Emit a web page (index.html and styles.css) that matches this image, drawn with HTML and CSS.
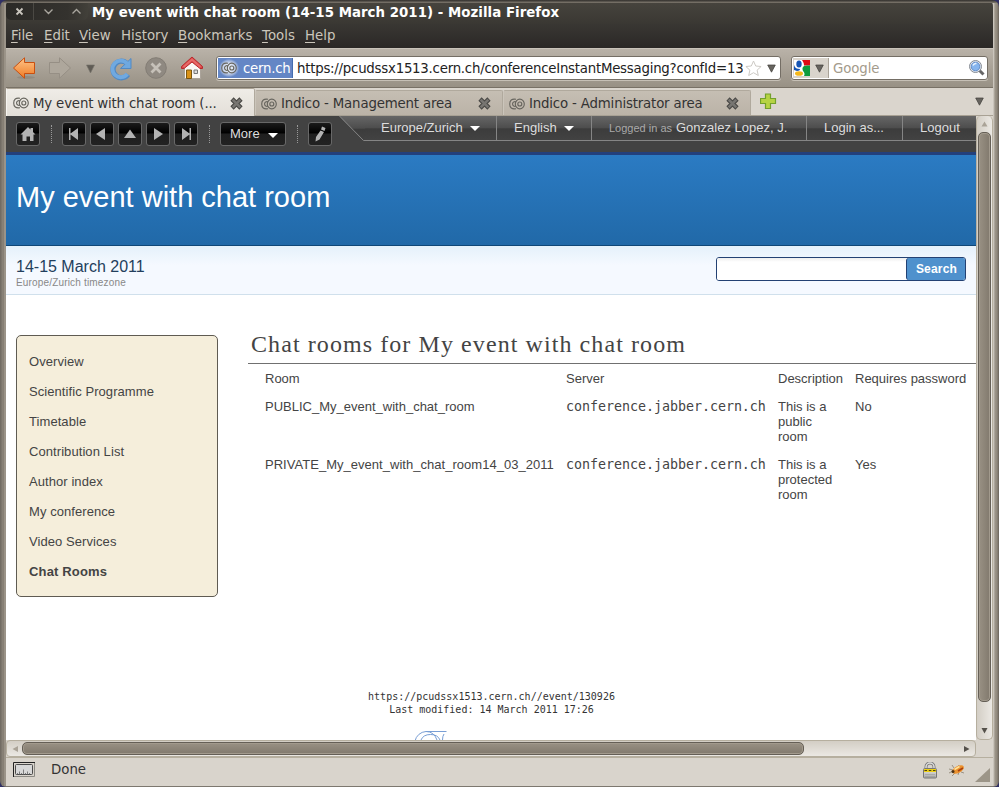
FILE: index.html
```html
<!DOCTYPE html>
<html lang="en">
<head>
<meta charset="utf-8">
<title>My event with chat room</title>
<link rel="stylesheet" href="styles.css">
</head>
<body>
<svg class="defs" width="0" height="0">
  <defs>
    <symbol id="co" viewBox="0 0 16 12">
      <g fill="none" stroke="#68665f" stroke-width="1.15">
        <path d="M7 1.300Q.7.300.7 6T7 10.700"/><path d="M7 4A2.300 2.300 0 1 0 7 8"/>
        <ellipse cx="10.800" cy="6" rx="4.500" ry="4.900"/><circle cx="10.800" cy="6" r="2"/>
      </g>
    </symbol>
    <symbol id="x" viewBox="0 0 13 13"><path d="M2 2l9 9M11 2L2 11" stroke="#4a4946" stroke-width="4.600"/><path d="M2.700 2.700l7.600 7.600M10.300 2.700L2.700 10.300" stroke="#777571" stroke-width="2.600"/></symbol>
    <symbol id="down" viewBox="0 0 9 9"><path d="M.7 1h7.600L4.500 8.200z" fill="#67645f" stroke="#3f3d39" stroke-width=".7"/></symbol>
    <linearGradient id="orange" x2="0" y2="1"><stop stop-color="#ffc58a"/><stop offset="1" stop-color="#ef7b24"/></linearGradient>
    <linearGradient id="silver" x2="0" y2="1"><stop stop-color="#ececea"/><stop offset="1" stop-color="#a8a8a5"/></linearGradient>
  </defs>
</svg>
<div class="window">
  <header class="titlebar">
    <div class="winbtns">
      <svg width="86" height="18" viewBox="0 0 86 18" fill="none" stroke="#aaa79f">
        <path d="M10.500 5.500l6 6M16.500 5.500l-6 6" stroke="#c9c6be" stroke-width="1.800"/>
        <path d="M38.500 6.500l4 4 4-4M66.500 10.500l4-4 4 4" stroke-width="1.300"/>
        <path d="M27.500 0v17" stroke="#4b4944"/>
      </svg>
    </div>
    <span class="wintitle">My event with chat room (14-15 March 2011) - Mozilla Firefox</span>
  </header>
  <nav class="menubar">
    <span class="m1"><u>F</u>ile</span><span class="m2"><u>E</u>dit</span><span class="m3"><u>V</u>iew</span><span class="m4">Hi<u>s</u>tory</span><span class="m5"><u>B</u>ookmarks</span><span class="m6"><u>T</u>ools</span><span class="m7"><u>H</u>elp</span>
  </nav>
  <div class="toolbar">
    <svg class="navicons" width="210" height="38" viewBox="6 49 210 38">
      <ellipse cx="26" cy="77.500" rx="9" ry="1.500" fill="#928b80"/>
      <path d="M13.500 68L24.500 57.800V62.500H34.500V73.500H24.500V78.200Z" fill="url(#orange)" stroke="#c94f10"/>
      <path d="M70.500 68L59.500 57.800V62.500H49.500V73.500H59.500V78.200Z" fill="#aea79c" stroke="#968f85"/>
      <path d="M86.500 65h8l-4 8z" fill="#605c55" stroke="#77736b" stroke-width=".6"/>
      <path d="M128 74.500A8.300 8.300 0 1 1 126.500 63" fill="none" stroke="#5189c3" stroke-width="5.200"/>
      <path d="M131 58.500V68.500H120.500Z" fill="#6fa8df" stroke="#5189c3"/>
      <path d="M127.300 74A8.300 8.300 0 1 1 127 63.500" fill="none" stroke="#70a9e0" stroke-width="3.800"/>
      <circle cx="156" cy="68" r="10.300" fill="#8f8981" stroke="#837d75"/>
      <path d="M151.500 63.500l9 9M160.500 63.500l-9 9" stroke="#c6c1b9" stroke-width="2.800"/>
      <path d="M184.500 67l7.500-8 8.500 8v11.500h-16z" fill="#faf8f5" stroke="#aaa39a"/>
      <path d="M186.500 70h5v8.500h-5z" fill="#d99218" stroke="#7c5710"/>
      <path d="M194 70h3.500v3.500h-3.500z" fill="#dedede" stroke="#777"/>
      <path d="M181.500 66.500L192 57l10.500 9.500v2H200L192 62l-8 6.500h-2.500z" fill="#d94747" stroke="#b8292d"/>
      <path d="M183.500 67l8.500-7.500 8.500 7.500" fill="none" stroke="#e76a68" stroke-width="2"/>
    </svg>
    <div class="urlbar">
      <div class="site"><span class="glow"><svg width="16" height="12"><use href="#co"/></svg></span><span class="sitename">cern.ch</span></div>
      <span class="url">https://pcudssx1513.cern.ch/conferenceInstantMessaging?confId=13</span>
      <svg class="star" width="17" height="17" viewBox="0 0 17 17"><path d="M8.500 1l2.200 5 5.400.5-4 3.700 1.200 5.300-4.800-2.800-4.800 2.800 1.200-5.300-4-3.700 5.400-.5z" fill="#fff" stroke="#ccc9c4"/></svg>
      <svg class="urldown" width="9" height="9"><use href="#down"/></svg>
    </div>
    <div class="searchbar">
      <div class="engine">
        <svg width="16" height="16" viewBox="0 0 16 16"><path fill="#fff" d="M0 0h16v16H0z"/><path fill="#df0a13" d="M8 0h8v5.500H10C10 3 9 2 8 0z"/><path fill="#0f9b3c" d="M8.500 8c1-2.500 3-2.500 7.500-2.500V16H10c2-4-2-4-1.500-8z"/><path fill="#1655b5" d="M0 5c1 3 3 4 6 4 0 1-1 2-3 2L0 10z"/><ellipse cx="5" cy="4" rx="2.700" ry="3.500" fill="#1655b5"/><ellipse cx="5" cy="13.500" rx="4" ry="2.300" fill="#f4b71b"/></svg>
        <svg width="9" height="9"><use href="#down"/></svg>
      </div>
      <span class="placeholder">Google</span>
      <svg class="mag" width="18" height="18" viewBox="0 0 18 18"><path d="M11.500 11.500l4 4" stroke="#666" stroke-width="3"/><circle cx="7.500" cy="7.500" r="6" fill="#dfe5ee" stroke="#868b93"/><circle cx="7.500" cy="7.500" r="4.300" fill="#86b5ee" stroke="#4f7fc0" stroke-width=".8"/><path d="M5 6.500q.800-2.500 3.500-2" fill="none" stroke="#e9f3ff" stroke-width="1.500"/></svg>
    </div>
  </div>
  <div class="tabs">
    <div class="tab active"><svg width="16" height="12"><use href="#co"/></svg><span class="t1">My event with chat room (...</span><svg class="close" width="13" height="13"><use href="#x"/></svg></div>
    <div class="tab"><svg width="16" height="12"><use href="#co"/></svg><span class="t2">Indico - Management area</span><svg class="close" width="13" height="13"><use href="#x"/></svg></div>
    <div class="tab"><svg width="16" height="12"><use href="#co"/></svg><span class="t3">Indico - Administrator area</span><svg class="close" width="13" height="13"><use href="#x"/></svg></div>
    <svg class="plus" width="17" height="17" viewBox="0 0 17 17"><path d="M5.500 1h5v4.500h5v5h-5v5h-5v-5h-5v-5h5z" fill="#b6d343" stroke="#73a02b" stroke-width="1.200"/></svg>
    <svg class="alltabs" width="9" height="9"><use href="#down"/></svg>
  </div>
  <div class="middle">
    <main class="page">
      <div class="topbar">
        <div class="tools">
          <button class="tool home"><svg width="22" height="22" viewBox="0 0 22 22"><path d="M3.500 11.500l7.500-7.500 2.500 2.500V5H16v4l2.500 2.500h-2V18H13v-4.500H9.500V18H5.500v-6.500z" fill="#b3b3b3"/></svg></button>
          <i class="sep s1"></i>
          <button class="tool"><svg width="22" height="22" viewBox="0 0 22 22"><path d="M6 5h1.500v5.500L15 5v12l-7.500-5.500V17H6z" fill="#b3b3b3"/></svg></button>
          <button class="tool"><svg width="22" height="22" viewBox="0 0 22 22"><path d="M14 5v12l-9-6z" fill="#b3b3b3"/></svg></button>
          <button class="tool"><svg width="22" height="22" viewBox="0 0 22 22"><path d="M5 15h12l-6-8.500z" fill="#b3b3b3"/></svg></button>
          <button class="tool"><svg width="22" height="22" viewBox="0 0 22 22"><path d="M7 5v12l9-6z" fill="#b3b3b3"/></svg></button>
          <button class="tool"><svg width="22" height="22" viewBox="0 0 22 22"><path d="M16 5h-1.500v5.500L7 5v12l7.500-5.500V17H16z" fill="#b3b3b3"/></svg></button>
          <i class="sep s2"></i>
          <button class="tool more">More<b class="caret"></b></button>
          <i class="sep s3"></i>
          <button class="tool"><svg width="22" height="22" viewBox="0 0 22 22"><path d="M13 3.500l3.500 1.500-1 3-3.500-1.500zM11.500 7.500l3.500 1.500-4.500 7.500L6.500 18.500l.5-4.500z" fill="#b3b3b3"/></svg></button>
        </div>
        <div class="session">
          <svg class="slope" width="26" height="25" viewBox="0 0 26 25"><defs><linearGradient id="bar" x2="0" y2="1"><stop stop-color="#666"/><stop offset=".5" stop-color="#4d4d4d"/><stop offset=".53" stop-color="#3c3c3c"/><stop offset="1" stop-color="#424242"/></linearGradient></defs><path d="M0 0h26v24.500H24z" fill="url(#bar)"/><path d="M.5 0L24.500 24.500H26" fill="none" stroke="#858585"/></svg>
          <div class="cell c1">Europe/Zurich<b class="caret"></b></div>
          <div class="cell c2">English<b class="caret"></b></div>
          <div class="cell c3"><small>Logged in as</small><span>Gonzalez Lopez, J.</span></div>
          <div class="cell c4">Login as...</div>
          <div class="cell c5">Logout</div>
        </div>
      </div>
      <div class="banner"><h1>My event with chat room</h1></div>
      <div class="subbanner">
        <div><div class="date">14-15 March 2011</div><div class="zone">Europe/Zurich timezone</div></div>
        <div class="search"><div class="field"></div><button>Search</button></div>
      </div>
      <div class="content">
        <ul class="side">
          <li>Overview</li><li>Scientific Programme</li><li>Timetable</li><li>Contribution List</li><li>Author index</li><li>My conference</li><li>Video Services</li><li class="current">Chat Rooms</li>
        </ul>
        <section class="rooms">
          <h2>Chat rooms for My event with chat room</h2>
          <div class="grid">
            <span>Room</span><span>Server</span><span>Description</span><span>Requires password</span>
            <span>PUBLIC_My_event_with_chat_room</span><code>conference.jabber.cern.ch</code><span>This is a<br>public<br>room</span><span>No</span>
            <span class="private">PRIVATE_My_event_with_chat_room14_03_2011</span><code>conference.jabber.cern.ch</code><span>This is a<br>protected<br>room</span><span>Yes</span>
          </div>
        </section>
      </div>
      <footer class="foot">https://pcudssx1513.cern.ch//event/130926<br>Last modified: 14 March 2011 17:26
        <svg class="cern" width="34" height="10" viewBox="0 0 34 10" fill="none" stroke="#789ed5"><path d="M1 11A12 12 0 0 1 12 1.500H32.500M7 10A10 8 0 0 1 26 10M12 1.500Q20 1.500 23 10M28.500 10q0-4 1.500-6"/></svg>
      </footer>
    </main>
    <div class="vscroll"><svg width="17" height="16" viewBox="0 0 17 16"><path d="M5.500 10.500h6L8.500 5.500z" fill="#aaa397"/></svg><div class="vthumb"></div><svg class="vend" width="17" height="18" viewBox="0 0 17 18"><path d="M5.500 7h6l-3 5.500z" fill="#55514b"/></svg></div>
  </div>
  <div class="hscroll"><div class="htrack"><svg width="16" height="16" viewBox="0 0 16 16"><path d="M11 5v6L5.500 8z" fill="#aaa397"/></svg><div class="hthumb"></div><svg class="hend" width="18" height="16" viewBox="0 0 18 16"><path d="M7 5v6l5.500-3z" fill="#55514b"/></svg></div></div>
  <div class="status">
    <svg width="23" height="16" viewBox="0 0 23 16"><path d="M.5 15V.5H22" fill="none" stroke="#222"/><path d="M1 14.500h20.500V1" fill="none" stroke="#8b8983"/><rect x="2.500" y="2.500" width="17" height="10" rx="1" fill="#d8d8d8" stroke="#4b4b4b"/><path d="M4.500 11v1.500M6.500 9.500v3M8.500 11v1.500M10.500 7.500v5M12.500 11v1.500M14.500 9.500v3M16.500 11v1.500" stroke="#666" stroke-width=".8"/></svg>
    <span>Done</span>
    <svg class="lock" width="16" height="17" viewBox="0 0 16 17"><path d="M4 8V5a4 4 0 0 1 8 0v3" fill="none" stroke="#777" stroke-width="3"/><path d="M4 8V5a4 4 0 0 1 8 0v3" fill="none" stroke="#ddd" stroke-width="1.500"/><rect x="1.500" y="6.500" width="13" height="9.500" rx="1" fill="url(#silver)" stroke="#777"/><path d="M2 7h12v3H2z" fill="#edcf13"/><path d="M2.500 8.500h2.500M6.800 8.500h2.500M11 8.500h2.500" stroke="#4c4410" stroke-width="1.200"/><path d="M3 12.500h10M3 14.500h10" stroke="#999" stroke-width=".6"/></svg>
    <svg class="bug" width="18" height="17" viewBox="0 0 18 17"><path d="M1 7l4 1M6 6l-2-3M4 14l3-3M10 13l1-3M10 5l1-2M13 10l3 1M1 11l4-2" stroke="#8a806f" stroke-width=".8"/><ellipse cx="10" cy="7.500" rx="6.500" ry="3.300" transform="rotate(-28 10 7.500)" fill="#ec922e"/><path d="M10 9l5-3" stroke="#a9410f" stroke-width="1.500"/><path d="M6.500 7.500l5-3" stroke="#ffe29b" stroke-width="1.500"/><circle cx="5" cy="9.500" r="1.500" fill="#4a3218"/></svg>
    <svg class="grip" width="15" height="14" viewBox="0 0 15 14"><path d="M0 14L15 0v14z" fill="#9c9588"/></svg>
  </div>
</div>
</body>
</html>
```
FILE: styles.css
```css
* { box-sizing: border-box; }
html, body { margin: 0; width: 999px; height: 787px; overflow: hidden; background: #303064; }
.defs { position: absolute; }
svg { display: block; flex: none; }
.window {
  width: 999px; height: 787px; overflow: hidden;
  border-style: solid; border-color: transparent; border-width: 3px 6px 1px;
  border-radius: 7px 7px 6px 6px;
  background:
    linear-gradient(#7d786f, #7d786f) border-box bottom / 100% 1px no-repeat,
    linear-gradient(#302e2b, #817a70) border-box top / 100% 3px no-repeat,
    linear-gradient(90deg, #6d675f, #8c857a 3px, #81796e 4px, #b3aca0 5px, #837c72 6px, transparent 6px) border-box,
    linear-gradient(90deg, #d9d4cc, #9d968a 2px, #90887c 4px, #69635a 6px) border-box right / 6px 100% no-repeat,
    #d9d4cc border-box;
  display: flex; flex-direction: column;
  font: 13.33px "DejaVu Sans", sans-serif; color: #333;
}
.titlebar { height: 21px; flex: none; display: flex; background: linear-gradient(#46433d, #3a3833); }
.winbtns { width: 82px; height: 17px; overflow: hidden; background: linear-gradient(90deg, #2b2a27, #34322e 75%, #42403a); border-radius: 0 0 5px 5px; }
.wintitle { margin-left: 4px; color: #fff; font-weight: bold; line-height: 20px; letter-spacing: .04px; white-space: nowrap; }
.menubar { height: 24px; flex: none; display: flex; background: linear-gradient(#393733, #2b2826); color: #cbc6bb; line-height: 23px; padding-left: 5px; }
.menubar span { white-space: nowrap; }
.menubar u { text-underline-offset: 2px; }
.m1 { width: 33px; } .m2 { width: 35px; } .m3 { width: 42px; } .m4 { width: 57px; } .m5 { width: 84px; } .m6 { width: 43px; }
.toolbar { height: 40px; flex: none; display: flex; background: linear-gradient(#b9b2a8, #989185); border-top: 1px solid #c9c3b9; border-bottom: 1px solid #787166; }
.urlbar { margin: 7px 0 0 0; width: 565px; height: 24px; border: 1px solid #746e65; border-radius: 3px; background: #fff; display: flex; align-items: center; box-shadow: 0 1px #c6c0b6; padding: 1px; }
.site { width: 75px; height: 20px; background: #6486c5; display: flex; align-items: center; color: #fff; border-right: 1px solid #456cae; flex: none; }
.glow { padding: 3px 2px; margin-left: 1px; background: radial-gradient(#e1e8f4 30%, #a6b9dd 55%, #6486c5 72%); }
.sitename { margin-left: 4px; letter-spacing: -.25px; }
.url { margin-left: 4px; width: 446px; overflow: hidden; white-space: nowrap; color: #222; letter-spacing: -.24px; }
.star { margin-left: 2px; }
.urldown { margin-left: 5px; }
.searchbar { margin: 7px 0 0 10px; width: 197px; height: 24px; border: 1px solid #746e65; border-radius: 3px; background: #fff; display: flex; align-items: center; box-shadow: 0 1px #c6c0b6; padding: 1px; }
.engine { width: 36px; height: 20px; background: #d9d4cc; border-right: 1px solid #aaa398; display: flex; align-items: center; gap: 5px; padding-left: 1px; }
.placeholder { margin-left: 4px; color: #a49b8c; letter-spacing: -.1px; }
.mag { margin-left: auto; margin-right: 0; }
.tabs { height: 28px; flex: none; display: flex; background: #dad5cd; border-bottom: 1px solid #a8a194; }
.tab { margin-top: 2px; width: 248px; height: 25px; padding: 1px 11px 0 5px; display: flex; align-items: center; background: linear-gradient(#c5beb3, #bbb3a7); border: 1px solid #b0a99d; border-left-color: #cbc5bb; border-bottom: 0; border-radius: 2px 2px 0 0; }
.tab span { margin-left: 4px; white-space: nowrap; letter-spacing: -.17px; }
.tab.active { margin-top: 0; width: 249px; height: 28px; padding-left: 6px; background: linear-gradient(#efece7, #e3dfd8); border-top-color: #aaa294; border-left-color: #f6f4f0; }
.close { margin-left: auto; }
.plus { margin: 5px 0 0 9px; }
.alltabs { margin: 9px 9px 0 auto; }
.middle { height: 624px; flex: none; display: flex; }
.page { width: 970px; overflow: hidden; background: #fff; color: #444; font: 13px "Liberation Sans", sans-serif; display: flex; flex-direction: column; }
.topbar { height: 39px; flex: none; background: #424242; border-bottom: 3px solid #23407c; display: flex; }
.tools { display: flex; width: 333px; padding: 6px 0 0 10px; }
.tool { width: 24px; height: 24px; padding: 0; margin-right: 4px; border: 1px solid #686868; border-radius: 3px; background: linear-gradient(#1b1b1b, #000 45%, #1f1f1f 50%, #222); color: #ddd; font: 13px "Liberation Sans", sans-serif; flex: none; }
.home { margin-right: 0; }
.sep { width: 1px; height: 18px; margin-top: 3px; border-left: 1px dotted #999; flex: none; }
.s1 { margin-left: 11px; margin-right: 10px; } .s2 { margin-left: 7px; margin-right: 10px; } .s3 { margin-left: 7px; margin-right: 10px; }
.more { width: 66px; display: flex; align-items: center; padding-left: 9px; line-height: 20px; padding-bottom: 1px; gap: 8px; }
.caret { display: inline-block; border: 5px solid transparent; border-top: 5px solid #fff; border-bottom: 0; position: relative; top: 2px; }
.session { display: flex; width: 637px; }
.cell { height: 25px; padding-top: 4px; line-height: 16px; color: #ddd; background: linear-gradient(#666, #4d4d4d 50%, #3c3c3c 53%, #424242); border-bottom: 1px solid #858585; box-shadow: inset -1px 0 #858585; white-space: nowrap; }
.cell .caret { margin-left: 7px; top: -1px; }
.cell small { font-size: 11px; color: #aaa; margin-right: 4px; }
.c1 { width: 132px; padding-left: 16px; } .c2 { width: 95px; padding-left: 17px; } .c3 { width: 215px; padding-left: 17px; } .c4 { width: 96px; padding-left: 17px; } .c5 { width: 73px; padding-left: 17px; box-shadow: none; }
.banner { height: 91px; flex: none; background: linear-gradient(#2b7bc3, #2169a8); border-bottom: 1px solid #0f4777; padding: 25px 10px; }
h1 { margin: 0; font-size: 29px; line-height: 34px; font-weight: normal; color: #fff; white-space: nowrap; }
.subbanner { height: 49px; flex: none; background: linear-gradient(#e5f1fb, #f5f9ff 40%); border-bottom: 1px solid #d0e0ec; padding: 11px 10px 0; display: flex; justify-content: space-between; }
.date { font-size: 16px; line-height: 19px; color: #233f5d; }
.zone { font-size: 10px; line-height: 13px; color: #888; letter-spacing: .17px; }
.search { display: flex; height: 24px; width: 250px; border: 1px solid #234173; border-radius: 3px; overflow: hidden; }
.field { flex: 1; background: linear-gradient(#eee, #fff 4px); }
.search button { width: 59px; padding: 0 0 0 1px; border: 0; border-left: 1px solid #234173; border-radius: 3px 0 0 3px; background: #4f91cd; color: #fff; font: bold 12px "Liberation Sans", sans-serif; letter-spacing: .2px; }
.content { display: flex; padding: 40px 0 0 10px; height: 395px; flex: none; }
.side { margin: 0; padding: 11px 12px; width: 202px; height: 262px; flex: none; list-style: none; background: #f5eedb; border: 1px solid #5f5b52; border-radius: 5px; letter-spacing: .07px; }
.side li { height: 30px; line-height: 30px; }
.current { font-weight: bold; letter-spacing: .15px; }
.rooms { margin-left: 30px; width: 728px; }
h2 { margin: 0; height: 29px; padding-left: 3px; border-bottom: 1px solid #707070; font: 24px/18px "Liberation Serif", serif; letter-spacing: 1.08px; white-space: nowrap; }
.grid { display: grid; grid-template-columns: 301px 212px 77px 121px; grid-template-rows: 28px 58px 58px; padding: 7px 0 0 17px; line-height: 15px; white-space: nowrap; }
.grid code { font: 13.33px/15px "DejaVu Sans Mono", monospace; letter-spacing: -.03px; }
.private { letter-spacing: .03px; }
.foot { text-align: center; font: 10px/13px "DejaVu Sans Mono", monospace; color: #333; width: 971px; }
.cern { margin: 14px 0 0 408px; }
.vscroll { width: 17px; background: linear-gradient(90deg, #d3cec5, #ebe8e3); border: 1px solid #b6af9f; border-width: 0 1px 1px; border-radius: 5px; display: flex; flex-direction: column; align-items: center; }
.vthumb { width: 13px; height: 570px; border: 1px solid #655f56; border-radius: 5px; background: linear-gradient(90deg, #999184, #81796d); box-shadow: inset 0 0 0 1px #a29a8d; flex: none; }
.vend { margin-top: auto; }
.hscroll { height: 17px; flex: none; background: #d9d4cc; }
.htrack { width: 970px; height: 17px; border: 1px solid #b6af9f; border-radius: 4px; background: linear-gradient(#d3cec5, #ebe8e3); display: flex; align-items: center; }
.hthumb { width: 782px; height: 13px; border: 1px solid #655f56; border-radius: 5px; background: linear-gradient(#999184, #81796d); box-shadow: inset 0 0 0 1px #a29a8d; margin-left: -1px; flex: none; }
.hend { margin-left: auto; }
.status { height: 29px; flex: none; border-top: 1px solid #b6af9f; background: #d9d4cc; display: flex; align-items: center; padding: 0 3px 4px 7px; }
.status span { margin: -2px 0 0 15px; }
.lock { margin-left: auto; margin-right: 10px; }
.grip { margin-left: 9px; align-self: flex-end; }
```
